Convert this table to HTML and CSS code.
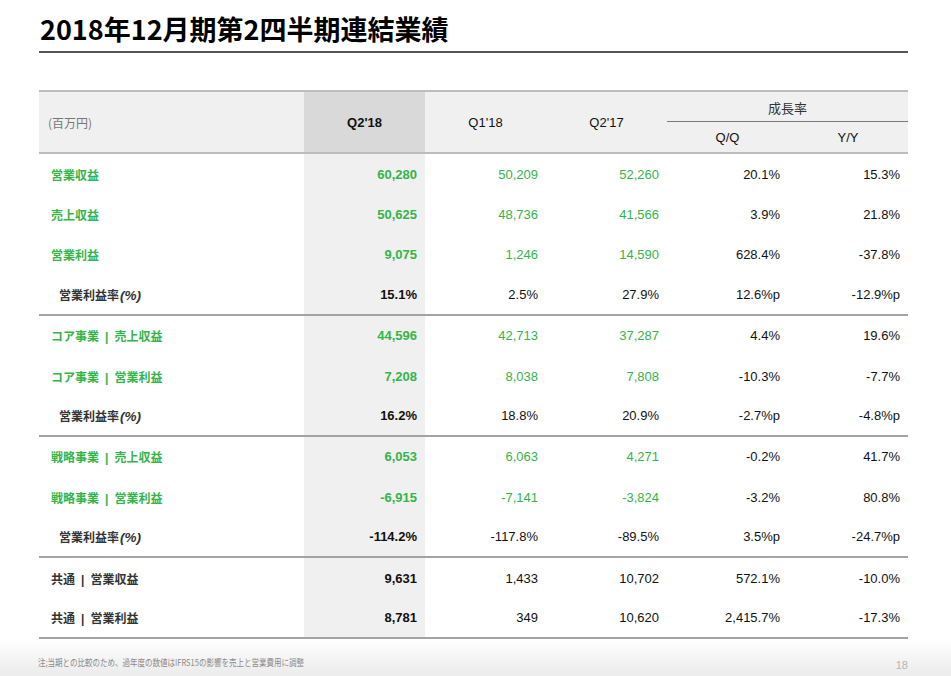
FILE: index.html
```html
<!DOCTYPE html>
<html lang="ja">
<head>
<meta charset="utf-8">
<title>2018年12月期第2四半期連結業績</title>
<link rel="stylesheet" href="styles.css">
</head>
<body>
<div class="page">
  <header class="head">
    <h1 class="title">2018年12月期第2四半期連結業績</h1>
  </header>
  <main class="content">
    <table class="fin">
      <colgroup>
        <col class="c-label"><col class="c-num"><col class="c-num"><col class="c-num"><col class="c-num"><col class="c-last">
      </colgroup>
      <thead>
        <tr class="h1row">
          <th rowspan="2" class="unit">(百万円)</th>
          <th rowspan="2" class="hl qcur">Q2'18</th>
          <th rowspan="2" class="q">Q1'18</th>
          <th rowspan="2" class="q">Q2'17</th>
          <th colspan="2" class="growth">成長率</th>
        </tr>
        <tr class="h2row">
          <th class="q sub">Q/Q</th>
          <th class="q sub">Y/Y</th>
        </tr>
      </thead>
      <tbody>
        <tr class="g">
          <td class="lbl">営業収益</td><td class="hl">60,280</td><td>50,209</td><td>52,260</td><td class="k">20.1%</td><td class="k">15.3%</td>
        </tr>
        <tr class="g">
          <td class="lbl">売上収益</td><td class="hl">50,625</td><td>48,736</td><td>41,566</td><td class="k">3.9%</td><td class="k">21.8%</td>
        </tr>
        <tr class="g">
          <td class="lbl">営業利益</td><td class="hl">9,075</td><td>1,246</td><td>14,590</td><td class="k">628.4%</td><td class="k">-37.8%</td>
        </tr>
        <tr class="r sep">
          <td class="lbl ind">営業利益率<i>(%)</i></td><td class="hl">15.1%</td><td>2.5%</td><td>27.9%</td><td>12.6%p</td><td>-12.9%p</td>
        </tr>
        <tr class="g">
          <td class="lbl">コア事業<span class="bar">|</span>売上収益</td><td class="hl">44,596</td><td>42,713</td><td>37,287</td><td class="k">4.4%</td><td class="k">19.6%</td>
        </tr>
        <tr class="g">
          <td class="lbl">コア事業<span class="bar">|</span>営業利益</td><td class="hl">7,208</td><td>8,038</td><td>7,808</td><td class="k">-10.3%</td><td class="k">-7.7%</td>
        </tr>
        <tr class="r sep">
          <td class="lbl ind">営業利益率<i>(%)</i></td><td class="hl">16.2%</td><td>18.8%</td><td>20.9%</td><td>-2.7%p</td><td>-4.8%p</td>
        </tr>
        <tr class="g">
          <td class="lbl">戦略事業<span class="bar">|</span>売上収益</td><td class="hl">6,053</td><td>6,063</td><td>4,271</td><td class="k">-0.2%</td><td class="k">41.7%</td>
        </tr>
        <tr class="g">
          <td class="lbl">戦略事業<span class="bar">|</span>営業利益</td><td class="hl">-6,915</td><td>-7,141</td><td>-3,824</td><td class="k">-3.2%</td><td class="k">80.8%</td>
        </tr>
        <tr class="r sep">
          <td class="lbl ind">営業利益率<i>(%)</i></td><td class="hl">-114.2%</td><td>-117.8%</td><td>-89.5%</td><td>3.5%p</td><td>-24.7%p</td>
        </tr>
        <tr class="r">
          <td class="lbl">共通<span class="bar">|</span>営業収益</td><td class="hl">9,631</td><td>1,433</td><td>10,702</td><td>572.1%</td><td>-10.0%</td>
        </tr>
        <tr class="r sep">
          <td class="lbl">共通<span class="bar">|</span>営業利益</td><td class="hl">8,781</td><td>349</td><td>10,620</td><td>2,415.7%</td><td>-17.3%</td>
        </tr>
      </tbody>
    </table>
  </main>
  <footer class="foot">
    <span class="note">注;当期との比較のため、過年度の数値はIFRS15の影響を売上と営業費用に調整</span>
    <span class="pnum">18</span>
  </footer>
</div>
</body>
</html>
```

FILE: styles.css
```css
html, body {
  margin: 0;
  padding: 0;
  background: #fff;
}
.page {
  width: 951px;
  height: 676px;
  display: flex;
  flex-direction: column;
  font-family: "Liberation Sans", Arial, "Noto Sans CJK JP", sans-serif;
  color: #111;
  overflow: hidden;
}
.head {
  padding: 0 43px 0 39px;
}
.title {
  margin: 0;
  padding: 13px 0 7px 1px;
  line-height: 31px;
  font-size: 27px;
  font-weight: 700;
  font-family: "Noto Sans CJK JP", sans-serif;
  color: #000;
  border-bottom: 2px solid #555;
}
.content {
  padding: 37px 43px 0 39px;
}
.fin {
  width: 869px;
  border-collapse: separate;
  border-spacing: 0;
  table-layout: fixed;
  font-size: 13px;
}
.c-label { width: 265px; }
.c-num { width: 121px; }
.c-last { width: 120px; }

.fin thead th {
  background: #f0f0f0;
  font-weight: 400;
  color: #111;
  padding: 0;
  text-align: center;
  vertical-align: middle;
}
.fin thead tr.h1row th {
  border-top: 2px solid #bdbdbd;
}
.fin thead th[rowspan] {
  border-bottom: 2px solid #bdbdbd;
}
.fin thead th.growth {
  height: 27px;
  padding-top: 2px;
  border-bottom: 1px solid #7a7a7a;
  font-family: "Noto Sans CJK JP", sans-serif;
  color: #333;
}
.fin thead th.sub {
  height: 29px;
  padding-top: 1px;
  border-bottom: 2px solid #bdbdbd;
}
.fin thead th.unit {
  text-align: left;
  padding-left: 9px;
  color: #777;
  font-size: 12px;
  font-family: "Noto Sans CJK JP", sans-serif;
}
.fin thead th.hl {
  background: #d9d9d9;
}
.fin thead th.qcur {
  font-weight: 700;
}

.fin tbody td {
  height: 40.4px;
  padding: 0 8px 0 0;
  text-align: right;
  vertical-align: middle;
  white-space: nowrap;
}
.fin tbody tr.sep td {
  height: 38.4px;
  border-bottom: 2px solid #a3a3a3;
}
.fin tbody td.hl {
  background: #f0f0f0;
  font-weight: 700;
}
.fin tbody td.lbl {
  text-align: left;
  padding-left: 12px;
  font-family: "Noto Sans CJK JP", sans-serif;
  font-weight: 700;
  font-size: 12px;
}
.fin tbody td.lbl.ind {
  padding-left: 20px;
}
.fin tbody td.lbl i {
  font-family: "Liberation Sans", Arial, sans-serif;
  font-style: italic;
  font-weight: 700;
  font-size: 13.5px;
  margin-left: 1px;
}
.bar {
  font-family: "Liberation Sans", Arial, sans-serif;
  font-weight: 700;
  margin: 0 6px;
}

.fin tbody tr.g td {
  color: #35b44a;
}
.fin tbody tr.g td.k {
  color: #111;
}
.fin tbody tr.r td {
  color: #111;
}
.fin tbody tr.r td.lbl {
  color: #333;
}

.foot {
  margin-top: auto;
  height: 38px;
  background: linear-gradient(to bottom, #ffffff 0%, #f4f4f4 55%, #ebebeb 100%);
  display: flex;
  align-items: center;
  justify-content: space-between;
  padding: 0 43px 0 38px;
}
.note {
  display: inline-block;
  font-family: "Noto Sans CJK JP", sans-serif;
  font-size: 9.5px;
  color: #8a8a8a;
  transform: scaleX(0.79);
  transform-origin: left center;
  white-space: nowrap;
  margin-top: 9px;
}
.pnum {
  font-size: 11px;
  color: #b5b5b5;
  margin-top: 16px;
}
```
